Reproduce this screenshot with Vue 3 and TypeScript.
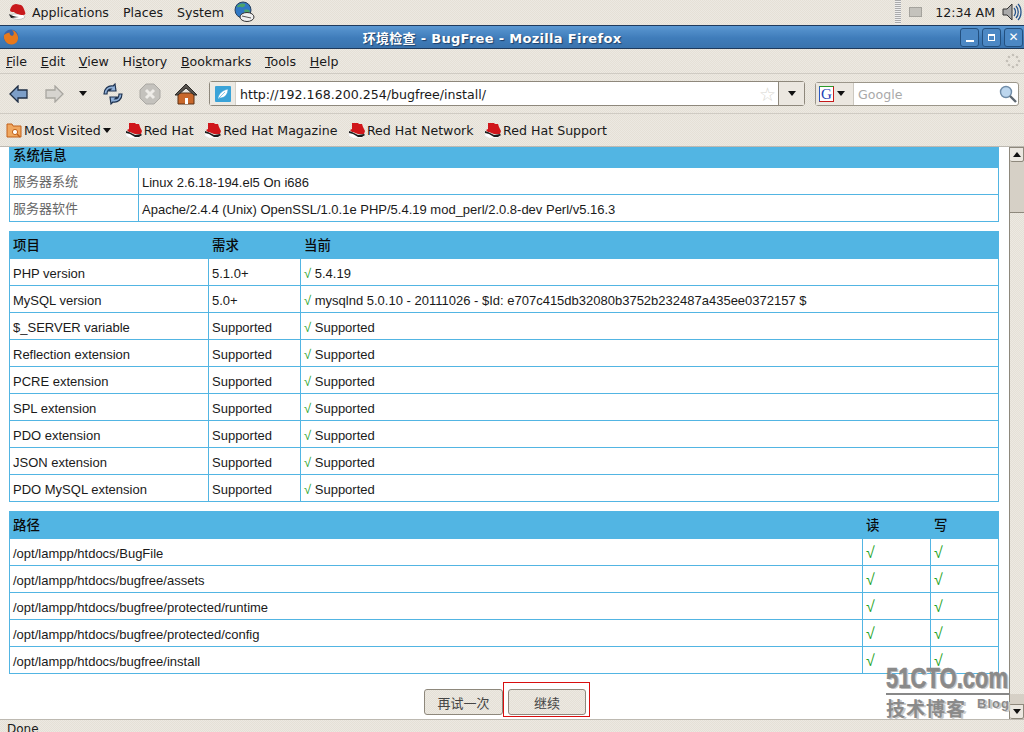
<script setup lang="ts">
const menus = [
  { key: 'F', rest: 'ile' },
  { key: 'E', rest: 'dit' },
  { key: 'V', rest: 'iew' },
  { pre: 'Hi', key: 's', rest: 'tory' },
  { key: 'B', rest: 'ookmarks' },
  { key: 'T', rest: 'ools' },
  { key: 'H', rest: 'elp' },
];

const bookmarks = ['Red Hat', 'Red Hat Magazine', 'Red Hat Network', 'Red Hat Support'];

const checks = [
  ['PHP version', '5.1.0+', '5.4.19'],
  ['MySQL version', '5.0+', 'mysqlnd 5.0.10 - 20111026 - $Id: e707c415db32080b3752b232487a435ee0372157 $'],
  ['$_SERVER variable', 'Supported', 'Supported'],
  ['Reflection extension', 'Supported', 'Supported'],
  ['PCRE extension', 'Supported', 'Supported'],
  ['SPL extension', 'Supported', 'Supported'],
  ['PDO extension', 'Supported', 'Supported'],
  ['JSON extension', 'Supported', 'Supported'],
  ['PDO MySQL extension', 'Supported', 'Supported'],
];

const paths = [
  '/opt/lampp/htdocs/BugFile',
  '/opt/lampp/htdocs/bugfree/assets',
  '/opt/lampp/htdocs/bugfree/protected/runtime',
  '/opt/lampp/htdocs/bugfree/protected/config',
  '/opt/lampp/htdocs/bugfree/install',
];
</script>

<template>
  <div class="desktop">
    <div class="panel">
      <svg class="hat" width="20" height="20" viewBox="0 0 20 20">
        <path d="M2 13c3 5 12 6 16 2-1-2-2-2-3-3L7 12z" fill="#fff" stroke="#999" stroke-width=".5" />
        <path d="M3 8c1-4 3-6 6-6 2 0 3 1 5 1 2 1 3 4 4 7 1 2 0 3-2 3-4 0-8-2-9-3-2 0-4 0-4-2z" fill="#c8191c" />
        <path d="M2 12c2 1 6 3 10 3l-8 1z" fill="#222" />
      </svg>
      <span class="panel-item first">Applications</span>
      <span class="panel-item">Places</span>
      <span class="panel-item">System</span>
      <svg class="globe" width="22" height="22" viewBox="0 0 22 22">
        <circle cx="10" cy="9" r="8" fill="#2f78c4" stroke="#27405c" />
        <path d="M4 5c3-3 6-3 8-2 1 2-2 4-4 3S5 8 4 5z" fill="#4aa36a" />
        <path d="M11 9c2-1 5 0 6 1-1 2-3 3-5 2z" fill="#4aa36a" />
        <ellipse cx="14" cy="16" rx="7" ry="4.500" fill="#f0f0f0" stroke="#333" />
        <path d="M9 15l9 2" stroke="#555" />
      </svg>
      <span class="spacer"></span>
      <span class="grip"></span>
      <span class="tray-box"></span>
      <span class="clock">12:34 AM</span>
      <svg class="volume" width="20" height="20" viewBox="0 0 20 20">
        <path d="M1 7h4l5-5v16l-5-5H1z" fill="#aaa" stroke="#333" />
        <path d="M12 6c2 2 2 6 0 8M14 4c3 3 3 9 0 12M16 2c4 4 4 12 0 16" fill="none" stroke="#24528c" stroke-width="1.3" />
      </svg>
    </div>

    <div class="titlebar">
      <svg class="fx" width="16" height="16" viewBox="0 0 16 16">
        <circle cx="8" cy="8" r="7.5" fill="#3a63a8" />
        <path d="M1 6c-1 5 3 10 8 9.500 4-.3 6.500-3.500 6-7.500-.4-3-2.500-6-6-7 2 2 2.500 4 1 5.500-2 .8-3.500-.5-3.500-3C4 4 2.500 5 1 6z" fill="#e8791c" />
      </svg>
      <span class="title">环境检查 - BugFree - Mozilla Firefox</span>
      <div class="win-buttons">
        <span class="win-btn"><i class="min"></i></span>
        <span class="win-btn"><i class="max"></i></span>
        <span class="win-btn close">✕</span>
      </div>
    </div>

    <div class="menubar">
      <span v-for="m in menus" :key="m.rest" class="menu">{{ m.pre }}<u>{{ m.key }}</u>{{ m.rest }}</span>
      <span class="spacer"></span>
      <svg width="16" height="16" viewBox="0 0 16 16" class="throbber">
        <g fill="#c4c0b8">
          <circle cx="8" cy="2" r="1.3" /><circle cx="12" cy="4" r="1.3" /><circle cx="14" cy="8" r="1.3" />
          <circle cx="12" cy="12" r="1.3" /><circle cx="8" cy="14" r="1.3" /><circle cx="4" cy="12" r="1.3" />
          <circle cx="2" cy="8" r="1.3" /><circle cx="4" cy="4" r="1.3" />
        </g>
      </svg>
    </div>

    <div class="navbar">
      <svg class="nav-back" width="20" height="18" viewBox="0 0 20 18">
        <path d="M1 9l8-8v4h9v8H9v4z" fill="#7d9fc8" stroke="#1f2f45" stroke-width="1.3" />
      </svg>
      <svg class="nav-forward" width="20" height="18" viewBox="0 0 20 18">
        <path d="M19 9l-8-8v4H2v8h9v4z" fill="#d6d4cf" stroke="#a8a6a0" stroke-width="1.3" />
      </svg>
      <span class="nav-drop"></span>
      <svg class="nav-reload" width="24" height="24" viewBox="0 0 24 24">
        <path d="M3 12c0-5 4-9 9-8l2-2 1 7-7 0 2-2c-3 0-4 2-4 5z" fill="#8fb0d8" stroke="#1f3350" stroke-width="1.2" />
        <path d="M21 12c0 5-4 9-9 8l-2 2-1-7 7 0-2 2c3 0 4-2 4-5z" fill="#8fb0d8" stroke="#1f3350" stroke-width="1.2" />
      </svg>
      <svg class="nav-stop" width="22" height="22" viewBox="0 0 22 22">
        <path d="M7 1h8l6 6v8l-6 6H7l-6-6V7z" fill="#c4c2bd" stroke="#aaa8a3" />
        <path d="M7 7l8 8M15 7l-8 8" stroke="#eeece8" stroke-width="3" />
      </svg>
      <svg class="nav-home" width="24" height="24" viewBox="0 0 24 24">
        <path d="M4 11h16v11H4z" fill="#c9682b" stroke="#5b3015" />
        <path d="M1 13L12 2l11 11-3 0-8-7-8 7z" fill="#56524c" stroke="#2c2a28" />
        <path d="M11 16h3v6h-3z" fill="#fff" />
      </svg>
      <div class="urlbar">
        <span class="site-icon">
          <svg width="16" height="16" viewBox="0 0 16 16">
            <rect width="16" height="16" rx="1" fill="#3aa3d8" />
            <path d="M3 12c1-5 5-8 10-9 0 5-3 9-8 9l-2 1zM4 12l6-6" fill="#fff" stroke="#3aa3d8" stroke-width=".6" />
          </svg>
        </span>
        <span class="url">http://192.168.200.254/bugfree/install/</span>
        <span class="star">☆</span>
        <span class="url-drop"><i class="arrow"></i></span>
      </div>
      <div class="searchbar">
        <span class="engine">
          <span class="g-icon">G</span>
          <i class="arrow"></i>
        </span>
        <span class="search-text">Google</span>
        <svg width="18" height="18" viewBox="0 0 18 18">
          <circle cx="7" cy="7" r="5.5" fill="#bcd6ee" stroke="#6f8ca8" stroke-width="1.4" />
          <path d="M11 11l6 6" stroke="#5d6670" stroke-width="2.4" />
        </svg>
      </div>
    </div>

    <div class="bookmarks">
      <svg width="16" height="16" viewBox="0 0 16 16">
        <path d="M1 2h5l1 2h8v11H1z" fill="#f0a860" stroke="#c2611a" />
        <circle cx="9" cy="10" r="2.6" fill="#fff" stroke="#c2611a" />
        <path d="M11 12l3 3" stroke="#c2611a" stroke-width="1.4" />
      </svg>
      <span class="bm-most">Most Visited</span>
      <i class="arrow most-arrow"></i>
      <span v-for="b in bookmarks" :key="b" class="bm">
        <svg width="16" height="16" viewBox="0 0 16 16">
          <path d="M0 10h3l5 3h7v2l-3 1H4L0 14z" fill="#fff" stroke="#ddd" stroke-width=".4" />
          <path d="M3 1h6l1 1 3 0 1 3 2 4-1 3-6 0-5-2H3L1 8l2-1z" fill="#d0161b" />
          <path d="M0 9l3 1 6 3 6-1 1 1-3 2-4 0-5-3-4-1z" fill="#1c1c1c" />
        </svg>
        {{ b }}
      </span>
    </div>

    <div class="viewport">
      <div class="page">
        <table class="grid first-table">
          <colgroup><col class="c-sys" /><col /></colgroup>
          <thead>
            <tr class="short"><th colspan="2">系统信息</th></tr>
          </thead>
          <tbody>
            <tr><td class="muted">服务器系统</td><td>Linux 2.6.18-194.el5 On i686</td></tr>
            <tr><td class="muted">服务器软件</td><td>Apache/2.4.4 (Unix) OpenSSL/1.0.1e PHP/5.4.19 mod_perl/2.0.8-dev Perl/v5.16.3</td></tr>
          </tbody>
        </table>

        <table class="grid">
          <colgroup><col class="c-item" /><col class="c-req" /><col /></colgroup>
          <thead>
            <tr><th>项目</th><th>需求</th><th>当前</th></tr>
          </thead>
          <tbody>
            <tr v-for="row in checks" :key="row[0]">
              <td>{{ row[0] }}</td>
              <td>{{ row[1] }}</td>
              <td><span class="ok">√</span> {{ row[2] }}</td>
            </tr>
          </tbody>
        </table>

        <table class="grid">
          <colgroup><col /><col class="c-read" /><col class="c-write" /></colgroup>
          <thead>
            <tr><th>路径</th><th>读</th><th>写</th></tr>
          </thead>
          <tbody>
            <tr v-for="p in paths" :key="p">
              <td>{{ p }}</td>
              <td><span class="ok tall">√</span></td>
              <td><span class="ok tall">√</span></td>
            </tr>
          </tbody>
        </table>

        <div class="actions">
          <button class="btn retry">再试一次</button>
          <span class="focus-box"><button class="btn next">继续</button></span>
        </div>
      </div>

      <div class="scrollbar">
        <span class="sb-btn"><i class="arrow up"></i></span>
        <span class="sb-thumb"></span>
        <span class="sb-track"></span>
        <span class="sb-stepper"></span>
        <span class="sb-btn"><i class="arrow"></i></span>
      </div>

      <div class="watermark">
        <div class="wm-top"><span>51CTO.com</span></div>
        <div class="wm-bottom"><span>技术博客</span><span class="wm-blog">Blog</span></div>
      </div>
    </div>

    <div class="statusbar">Done</div>
  </div>
</template>

<style>
html, body { margin: 0; padding: 0; }
</style>

<style scoped>
.desktop {
  --dither: repeating-conic-gradient(#ece9e2 0 25%, #e5e0d6 0 50%) 0 0 / 2px 2px;
  width: 1024px;
  height: 732px;
  overflow: hidden;
  display: flex;
  flex-direction: column;
  background: #e8e4dc;
  font-family: "DejaVu Sans", "Noto Sans CJK SC", sans-serif;
  font-size: 12.6px;
  color: #1a1a1a;
}

.spacer { flex: 1; }

.panel {
  height: 24px;
  flex: none;
  display: flex;
  align-items: center;
  padding: 0 0 0 7px;
  background: var(--dither);
  box-sizing: border-box;
}
.panel-item { margin-left: 14px; }
.panel-item.first { margin-left: 5px; }
.globe { margin-left: 9px; }
.grip {
  width: 6px;
  height: 24px;
  margin-right: 8px;
  background: repeating-linear-gradient(#aaa 0 1px, #eee 1px 2px);
}
.tray-box {
  width: 11px;
  height: 8px;
  background: #c4c2bc;
  border: 1px solid #a5a39d;
  margin-right: 13px;
}
.clock { margin-right: 7px; }
.volume { margin-right: 2px; }

.titlebar {
  height: 24px;
  flex: none;
  margin-top: 1px;
  display: flex;
  align-items: center;
  box-sizing: border-box;
  border-top: 1px solid #1f3a5c;
  border-bottom: 1px solid #1f3a5c;
  background: linear-gradient(#5b98d2, #3f7cba 55%, #3a73ad);
  position: relative;
  padding-left: 3px;
}
.title {
  position: absolute;
  left: 0;
  right: 0;
  text-align: center;
  color: #fff;
  font-weight: bold;
  font-size: 13px;
  letter-spacing: 0.3px;
  text-shadow: 1px 1px 1px #1e3f68;
  margin-left: -40px;
}
.win-buttons {
  margin-left: auto;
  display: flex;
  gap: 3px;
  padding-right: 1px;
}
.win-btn {
  width: 17px;
  height: 17px;
  border: 1px solid #23507f;
  border-radius: 3px;
  background: #4c88c4;
  color: #fff;
  font-size: 12px;
  font-weight: bold;
  display: flex;
  align-items: center;
  justify-content: center;
}
.min { width: 8px; height: 2px; background: #fff; margin-top: 8px; }
.max { width: 5px; height: 4px; border: 1px solid #fff; border-top-width: 2px; }

.menubar {
  height: 25px;
  flex: none;
  display: flex;
  align-items: center;
  padding: 0 3px 0 6px;
  gap: 13.7px;
  box-sizing: border-box;
  background: var(--dither);
  border-bottom: 1px solid #cfcbc3;
}
.menu u { text-decoration: underline; }

.navbar {
  height: 40px;
  flex: none;
  display: flex;
  align-items: center;
  box-sizing: border-box;
  background: var(--dither);
  border-bottom: 1px solid #cfcbc3;
  padding-left: 9px;
}
.nav-forward { margin-left: 15px; }
.nav-drop {
  margin-left: 15px;
  border-left: 4px solid transparent;
  border-right: 4px solid transparent;
  border-top: 5px solid #111;
}
.nav-reload { margin-left: 14px; }
.nav-stop { margin-left: 14px; }
.nav-home { margin-left: 13px; }

.urlbar {
  margin-left: 11px;
  width: 596px;
  height: 25px;
  box-sizing: border-box;
  display: flex;
  align-items: center;
  background: #fff;
  border: 1px solid #8e887c;
  border-radius: 3px;
}
.site-icon {
  width: 26px;
  height: 23px;
  display: flex;
  align-items: center;
  justify-content: center;
  background: #eceae4;
  border-right: 1px solid #d5d2ca;
  box-sizing: border-box;
}
.url { margin-left: 4px; flex: 1; padding-top: 1px; }
.star { color: #d8d6d0; font-size: 19px; margin-right: 2px; line-height: 20px; }
.url-drop {
  width: 25px;
  height: 23px;
  display: flex;
  align-items: center;
  justify-content: center;
  background: #ebe7e0;
  border-left: 1px solid #8e887c;
}
.arrow {
  display: block;
  width: 0;
  height: 0;
  border-left: 4px solid transparent;
  border-right: 4px solid transparent;
  border-top: 5px solid #111;
}
.arrow.up { border-top: none; border-bottom: 5px solid #111; }

.searchbar {
  margin-left: 10px;
  width: 204px;
  height: 24px;
  box-sizing: border-box;
  display: flex;
  align-items: center;
  background: #fff;
  border: 1px solid #9b968a;
  border-radius: 3px;
  padding-right: 1px;
}
.engine {
  width: 38px;
  height: 22px;
  display: flex;
  align-items: center;
  gap: 3px;
  box-sizing: border-box;
  padding-left: 3px;
  background: #ebe7e0;
  border-right: 1px solid #ccc8c0;
}
.g-icon {
  width: 13px;
  height: 14px;
  line-height: 14px;
  text-align: center;
  font-family: "Liberation Serif", serif;
  font-size: 15px;
  color: #1d3fb5;
  background: #fff;
  border: 1px solid;
  border-color: #2a9a2a #c41a1a #c41a1a #2a5ac4;
}
.search-text { margin-left: 4px; flex: 1; color: #a9a9a9; padding-top: 1px; }

.bookmarks {
  height: 33px;
  flex: none;
  display: flex;
  align-items: center;
  box-sizing: border-box;
  padding-left: 6px;
  background: var(--dither);
  border-bottom: 1px solid #bdb9b1;
}
.bm-most { margin-left: 2px; }
.most-arrow { margin-left: 2px; margin-right: 15px; }
.bm {
  display: flex;
  align-items: center;
  gap: 2px;
  margin-right: 11.5px;
}

.viewport {
  flex: 1;
  min-height: 0;
  display: flex;
  background: #fff;
  position: relative;
}
.page {
  flex: 1;
  min-width: 0;
  padding: 0 10px 0 9px;
}
.grid {
  width: 990px;
  border-collapse: collapse;
  table-layout: fixed;
  margin-top: 9px;
  font-family: "Liberation Sans", "Noto Sans CJK SC", sans-serif;
  font-size: 13px;
}
.first-table { margin-top: 0; }
.c-sys { width: 129px; }
.c-item { width: 199px; }
.c-req { width: 92px; }
.c-read { width: 68px; }
.c-write { width: 68px; }
.grid th {
  height: 27px;
  padding: 0 3px;
  background: #52b5e3;
  text-align: left;
  font-size: 13.4px;
  line-height: 15px;
  font-weight: 500;
  color: #0a0a0a;
  border: 1px solid #52b5e3;
  box-sizing: border-box;
}
.grid tr.short th { height: 20px; padding-bottom: 4px; }
.grid td {
  height: 27px;
  padding: 2px 3px 0;
  border: 1px solid #52b5e3;
  white-space: nowrap;
  overflow: hidden;
  box-sizing: border-box;
  line-height: 15px;
  color: #1a1a1a;
}
.grid td.muted { color: #666; padding-top: 0; }
.ok { color: #1fa31f; }
.ok.tall { font-size: 16px; line-height: 14px; }

.actions {
  display: flex;
  justify-content: center;
  align-items: flex-start;
  margin-top: 15px;
  padding-left: 6px;
}
.btn {
  height: 26px;
  box-sizing: border-box;
  border: 1px solid #8e887c;
  border-radius: 3px;
  background: var(--dither);
  color: #444;
  font-family: "Noto Sans CJK SC", sans-serif;
  font-size: 13px;
  padding: 0;
}
.retry { width: 79px; }
.next { width: 78px; }
.focus-box {
  display: flex;
  border: 1px solid #d80f0f;
  padding: 6px 3px 1px 4px;
  margin-top: -7px;
  height: 35px;
  box-sizing: border-box;
  width: 87px;
}

.scrollbar {
  width: 15px;
  flex: none;
  display: flex;
  flex-direction: column;
  background: var(--dither);
  border-left: 1px solid #8e887c;
  box-sizing: border-box;
}
.sb-btn {
  height: 15px;
  flex: none;
  display: flex;
  align-items: center;
  justify-content: center;
  background: #ebe7e0;
  border: 1px solid #8e887c;
  border-left: none;
  border-radius: 0 0 2px 2px;
  box-sizing: border-box;
}
.sb-thumb {
  height: 50px;
  flex: none;
  background: #d6d0c6;
  border-bottom: 1px solid #8e887c;
}
.sb-track { flex: 1; }
.sb-stepper { height: 10px; flex: none; background: #d6d0c6; }

.watermark {
  position: absolute;
  left: 886px;
  top: 517px;
  width: 124px;
  color: #8a8a8a;
  font-family: "Liberation Sans", sans-serif;
  font-weight: bold;
  text-shadow: 2px 1px 0 #c9c9c9;
}
.wm-top {
  font-size: 29px;
  line-height: 29px;
  height: 29px;
  white-space: nowrap;
  border-bottom: 2px solid #888;
}
.wm-top span {
  display: inline-block;
  transform: scaleX(0.76);
  transform-origin: left center;
  -webkit-text-stroke: 0.6px #8a8a8a;
}
.wm-bottom {
  display: flex;
  justify-content: space-between;
  font-family: "Noto Sans CJK SC", sans-serif;
  font-size: 19px;
  line-height: 25px;
  letter-spacing: 1px;
}
.wm-blog { font-family: "Liberation Sans", sans-serif; font-size: 13px; line-height: 18px; }

.statusbar {
  height: 13px;
  flex: none;
  box-sizing: border-box;
  padding: 2px 0 0 7px;
  font-size: 12px;
  line-height: 14px;
  background: var(--dither);
  border-top: 1px solid #bdb9b1;
}
</style>
